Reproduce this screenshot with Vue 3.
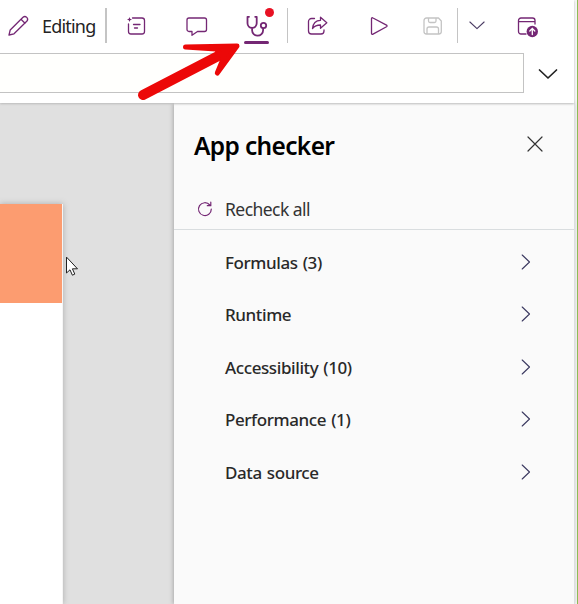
<script setup>
const checks = [
  'Formulas (3)',
  'Runtime',
  'Accessibility (10)',
  'Performance (1)',
  'Data source',
]
</script>

<template>
  <div class="window">
    <header class="top">
      <div class="toolbar">
        <div class="edit">
          <svg class="pencil" width="24" height="24" viewBox="0 0 24 24">
            <path d="M3 21l1.200-5L17 3.200c2.600-2 6 1.200 4 3.800L8 19.800zM15 5.200l4 4" />
          </svg>
          <span class="editing">Editing</span>
        </div>
        <i class="divider wide"></i>
        <div class="cell note">
          <svg width="24" height="24" viewBox="0 0 24 24">
            <path d="M8.500 4H18a2.500 2.500 0 0 1 2.500 2.500v11A2.500 2.500 0 0 1 18 20H7a2.500 2.500 0 0 1-2.500-2.500V10M9.500 10.500H16M10.500 14h3" />
            <path d="M5.500 3l.7 1.800 1.800.7-1.800.7-.7 1.800-.7-1.800L3 5.500l1.800-.7z" class="solid" />
          </svg>
        </div>
        <div class="cell">
          <svg width="24" height="24" viewBox="0 0 24 24">
            <path d="M4 4h15.500a2 2 0 0 1 2 2v9.500a2 2 0 0 1-2 2H12.500L7 21.300v-3.800H4a2 2 0 0 1-2-2V6a2 2 0 0 1 2-2z" />
          </svg>
        </div>
        <div class="cell active">
          <svg width="24" height="24" viewBox="0 0 24 24" class="bold">
            <path d="M4 2.800H2.500v6.500a4.600 4.600 0 0 0 9.200 0V2.800H10.200M7.100 14v2.200a5.500 5.500 0 0 0 11 0v-1.900" />
            <circle cx="18.500" cy="11.500" r="2.700" />
          </svg>
          <b class="dot"></b>
        </div>
        <i class="divider"></i>
        <div class="cell">
          <svg width="24" height="24" viewBox="0 0 24 24">
            <path d="M8.500 4.500H5.500a3 3 0 0 0-3 3v9.500a3 3 0 0 0 3 3h9.500a3 3 0 0 0 3-3V16" />
            <path d="M14.500 3.200l6.300 5.500-6.300 5.500v-3.200c-4 0-6 1-8 3.500.5-5 3.300-8.200 8-8.200z" />
          </svg>
        </div>
        <div class="cell">
          <svg width="24" height="24" viewBox="0 0 24 24">
            <path d="M5.500 4.800v14.500c0 .9.700 1.300 1.500.8l13.500-7.300c.7-.4.7-1.300 0-1.700L7 4C6.200 3.500 5.500 3.900 5.500 4.800z" />
          </svg>
        </div>
        <div class="cell">
          <svg width="24" height="24" viewBox="0 0 24 24" class="muted">
            <path d="M5.500 4H17.500l2.800 3v10.500a2.500 2.500 0 0 1-2.500 2.500h-12.300A2.500 2.500 0 0 1 3 17.500V6.500A2.500 2.500 0 0 1 5.500 4zM7.500 4v3A1.500 1.500 0 0 0 9 8.500h4.500A1.500 1.500 0 0 0 15 7V4M6 20v-5a2 2 0 0 1 2-2h7.500a2 2 0 0 1 2 2v5" />
          </svg>
        </div>
        <i class="divider"></i>
        <div class="cell">
          <svg width="16" height="10" viewBox="0 0 16 10" class="fine"><path d="M.9 1L8 7.700l7.100-6.700" /></svg>
        </div>
        <div class="cell">
          <svg width="24" height="24" viewBox="0 0 24 24">
            <path d="M10 20H5a2.500 2.500 0 0 1-2.500-2.500v-11A2.500 2.500 0 0 1 5 4h11.500A2.500 2.500 0 0 1 19 6.500V10M2.500 7.700H19" />
            <circle cx="16.300" cy="17.500" r="5.700" class="badge" />
            <path d="M16.300 20.500v-6M13.800 17l2.500-2.600 2.500 2.600" class="up" />
          </svg>
        </div>
      </div>
      <div class="formula">
        <div class="input"></div>
        <svg width="20" height="12" viewBox="0 0 20 12" class="expand"><path d="M1.500 2l8.500 8 8.500-8" /></svg>
      </div>
    </header>

    <main class="body">
      <section class="canvas">
        <div class="page"><div class="banner"></div></div>
      </section>
      <aside class="panel">
        <div class="title">
          <h1>App checker</h1>
          <svg width="16" height="16" viewBox="0 0 16 16" class="close"><path d="M1 1l14 14M15 1L1 15" /></svg>
        </div>
        <div class="recheck">
          <svg width="16" height="16" viewBox="0 0 16 16">
            <path d="M14.300 8A6.400 6.400 0 1 1 12.800 4L13.600 4.700M13.800 1.200v3.500H10.300" />
          </svg>
          <span>Recheck all</span>
        </div>
        <ul>
          <li v-for="check in checks" :key="check">
            <span class="name">{{ check }}</span>
            <svg width="10" height="16" viewBox="0 0 10 16"><path d="M1.200 1L8.500 8l-7.300 7" /></svg>
          </li>
        </ul>
      </aside>
    </main>

    <svg class="arrow" width="108" height="62" viewBox="0 0 108 62">
      <path class="shaft" d="M8 55L88 13.500" />
      <path class="head" d="M50.500 7L102 6 82.300 33 88.500 18 81 9z" />
    </svg>
    <svg class="cursor" width="13" height="21" viewBox="0 0 13 21">
      <path d="M1.500 1.500v15.500l3.500-3.200 2.400 5.400 2.400-1.100-2.400-5.300h4.700z" />
    </svg>
  </div>
</template>

<style>
body { margin: 0; background: #fff; }
</style>

<style scoped>
.window {
  position: relative;
  box-sizing: border-box;
  width: 578px;
  height: 604px;
  padding-right: 2px;
  border-right: 1px solid #8dbc56;
  background: #f5f5f5;
  overflow: hidden;
  font-family: "Noto Sans", "Open Sans", sans-serif;
}
svg { display: block; flex: none; fill: none; stroke: #742774; stroke-width: 1.3; stroke-linecap: round; stroke-linejoin: round; }
.top { position: relative; z-index: 1; height: 103px; margin-right: 1px; background: #fff; box-shadow: 0 1px 2px #bbb; }
.toolbar {
  display: grid;
  grid-template-columns: 105px 2px 60px 60px 60px 1px 60px 60px 49px 1px 38px 64px;
  height: 53px;
}
.edit { display: flex; align-items: flex-start; padding-left: 6px; }
.pencil { margin-top: 14px; }
.editing { margin: 13px 0 0 12px; font-size: 18px; line-height: 26px; letter-spacing: -.8px; color: #242424; }
.divider { height: 35px; margin-top: 8px; background: #c4c4c4; }
.cell { position: relative; display: flex; justify-content: center; align-items: center; height: 51px; }
.note { padding-right: 2px; }
.active::after { content: ""; position: absolute; left: 17px; top: 41px; width: 25px; height: 3px; border-radius: 2px; background: #742774; }
.dot { position: absolute; left: 38px; top: 8px; width: 9px; height: 9px; border-radius: 50%; background: #e81123; }
.bold { stroke-width: 1.8; }
.solid { fill: #742774; stroke: none; }
.muted { stroke: #c4c4c4; }
.fine { stroke: #4b3c64; stroke-width: 1.1; }
.badge { fill: #742774; stroke: none; }
.up { stroke: #fff; }
.formula { display: flex; align-items: center; height: 40px; }
.input { box-sizing: border-box; width: 524px; height: 40px; border: 1px solid #c3c3c3; border-left: 0; background: #fffffd; }
.expand { margin: 2px 0 0 14px; stroke: #222; stroke-width: 1.7; }
.body { display: grid; grid-template-columns: 174px 1fr; height: 501px; }
.canvas { background: #e0e0e0; padding-top: 101px; }
.page { width: 62px; height: 400px; background: #fff; border-right: 1px solid #f5f5f5; box-shadow: 0 0 6px #aaa; }
.banner { height: 99px; background: #fc9c70; }
.panel { position: relative; background: #fafafa; border-right: 1px solid #dcdfe0; box-shadow: -1px 0 4px #aaa; }
.title { display: flex; justify-content: space-between; height: 84px; padding: 0 31px 0 20px; }
h1 { margin: 25px 0 0; font-weight: 600; font-size: 24.5px; line-height: 36px; letter-spacing: -.65px; color: #000; }
.close { margin-top: 33px; stroke: #333; stroke-width: 1.2; }
.recheck { display: flex; align-items: center; box-sizing: border-box; height: 43px; padding: 2px 0 0 23px; border-bottom: 1px solid #d9dddf; color: #333; }
.recheck svg { stroke-width: 1.2; }
.recheck span { margin-left: 12px; font-size: 17.5px; letter-spacing: -.55px; }
ul { list-style: none; margin: 0; padding: 6px 0 0; }
li { display: flex; justify-content: space-between; align-items: center; height: 52.5px; padding: 0 43px 0 51px; }
.name { padding-top: 1px; font-weight: 500; font-size: 17px; line-height: 26px; letter-spacing: -.4px; word-spacing: 1px; color: #292929; }
li svg { stroke: #3b3960; stroke-width: 1.1; margin-top: -1px; }
.arrow { position: absolute; z-index: 2; left: 135px; top: 40px; }
.shaft { stroke: #ec0808; stroke-width: 10; }
.head { fill: #ec0808; stroke: #ec0808; stroke-width: 5; }
.cursor { position: absolute; left: 65px; top: 256px; fill: #fff; stroke: #222; stroke-width: 1; }
</style>
